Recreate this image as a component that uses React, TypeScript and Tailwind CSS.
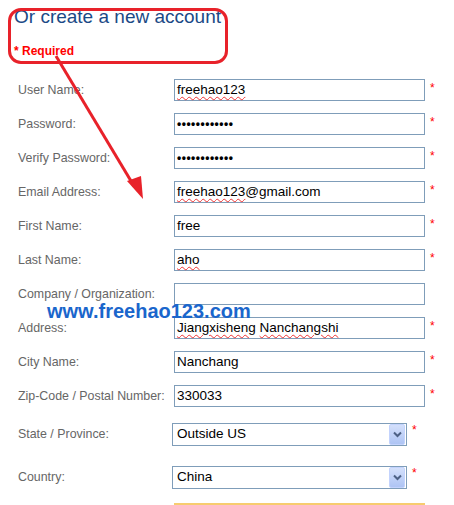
const font = { fontFamily: '"Liberation Sans", Arial, sans-serif' }

type Field = { label: string; value?: string; password?: boolean; spell?: string[]; required?: boolean }

const fields: Field[] = [
  { label: "User Name:", value: "freehao123", spell: ["freehao123"], required: true },
  { label: "Password:", value: "••••••••••••", password: true, required: true },
  { label: "Verify Password:", value: "••••••••••••", password: true, required: true },
  { label: "Email Address:", value: "freehao123@gmail.com", spell: ["freehao123"], required: true },
  { label: "First Name:", value: "free", required: true },
  { label: "Last Name:", value: "aho", spell: ["aho"], required: true },
  { label: "Company / Organization:", value: "" },
  { label: "Address:", value: "Jiangxisheng Nanchangshi", spell: ["Jiangxisheng", "Nanchangshi"], required: true },
  { label: "City Name:", value: "Nanchang", required: true },
  { label: "Zip-Code / Postal Number:", value: "330033", required: true },
]

function Value({ f }: { f: Field }) {
  if (f.password) return <span className="text-[12px] font-bold tracking-[0.5px]">{f.value}</span>
  const words = (f.value ?? "").split(/(\s+|@)/)
  return (
    <span>
      {words.map((w, i) =>
        f.spell?.includes(w) ? (
          <span key={i} className="underline decoration-wavy decoration-[#e33] decoration-1 underline-offset-2">{w}</span>
        ) : (
          <span key={i}>{w}</span>
        )
      )}
    </span>
  )
}

function Row({ f }: { f: Field }) {
  return (
    <div className="h-[34px] flex items-center">
      <div className="w-[174px] pl-[18px] text-[12.4px] text-[#666]">{f.label}</div>
      <div className="w-[251px] h-[22px] border border-[#7f9db9] bg-white flex items-center pl-[2px] text-[13.5px] text-black whitespace-pre">
        <Value f={f} />
      </div>
      {f.required && <span className="ml-[5px] self-start mt-[6px] text-[12px] text-[#f00]">*</span>}
    </div>
  )
}

function SelectRow({ label, value }: { label: string; value: string }) {
  return (
    <div className="h-[43px] flex items-center">
      <div className="w-[172px] pl-[18px] text-[12.4px] text-[#666]">{label}</div>
      <div className="w-[235px] h-[23px] border border-[#7f9db9] bg-white flex items-center text-[13.5px] text-black">
        <span className="flex-1 pl-[4px]">{value}</span>
        <div className="w-[16px] h-[21px] mr-[1px] rounded-[2px] bg-gradient-to-b from-[#d4e0fb] to-[#aec4f4] border border-[#c3d3fd] flex items-center justify-center">
          <svg width="9" height="7" viewBox="0 0 9 7">
            <path d="M1 1.5 L4.5 5 L8 1.5" fill="none" stroke="#4d6185" strokeWidth="2" />
          </svg>
        </div>
      </div>
      <span className="ml-[5px] self-start mt-[8px] text-[12px] text-[#f00]">*</span>
    </div>
  )
}

export default function App() {
  return (
    <div className="relative w-[454px] h-[505px] bg-white overflow-hidden" style={font}>
      <div className="pl-[14px] pt-[5px]">
        <h1 className="text-[19px] leading-[24px] text-[#1b4a86]">Or create a new account</h1>
        <p className="mt-[13px] text-[12px] font-bold text-[#f00]">* Required</p>
      </div>
      <div className="mt-[13px]">
        {fields.map((f) => (
          <Row key={f.label} f={f} />
        ))}
        <SelectRow label="State / Province:" value="Outside US" />
        <SelectRow label="Country:" value="China" />
        <div className="ml-[174px] mt-[4px] w-[251px] h-[2px] bg-[#f7cc6f]" />
      </div>

      {/* annotation overlays */}
      <div className="absolute left-[8px] top-[8px] w-[220px] h-[56px] rounded-[13px] border-[3px] border-[#e8222a]" />
      <svg className="absolute left-0 top-0" width="454" height="505">
        <line x1="56" y1="56" x2="134" y2="186" stroke="#e8222a" strokeWidth="3" />
        <polygon points="143,199 127,181 141,176" fill="#e8222a" />
      </svg>
      <div className="absolute left-[47px] top-[299px] text-[20px] font-bold text-[#1a66cc] leading-[24px]">www.freehao123.com</div>
    </div>
  )
}
